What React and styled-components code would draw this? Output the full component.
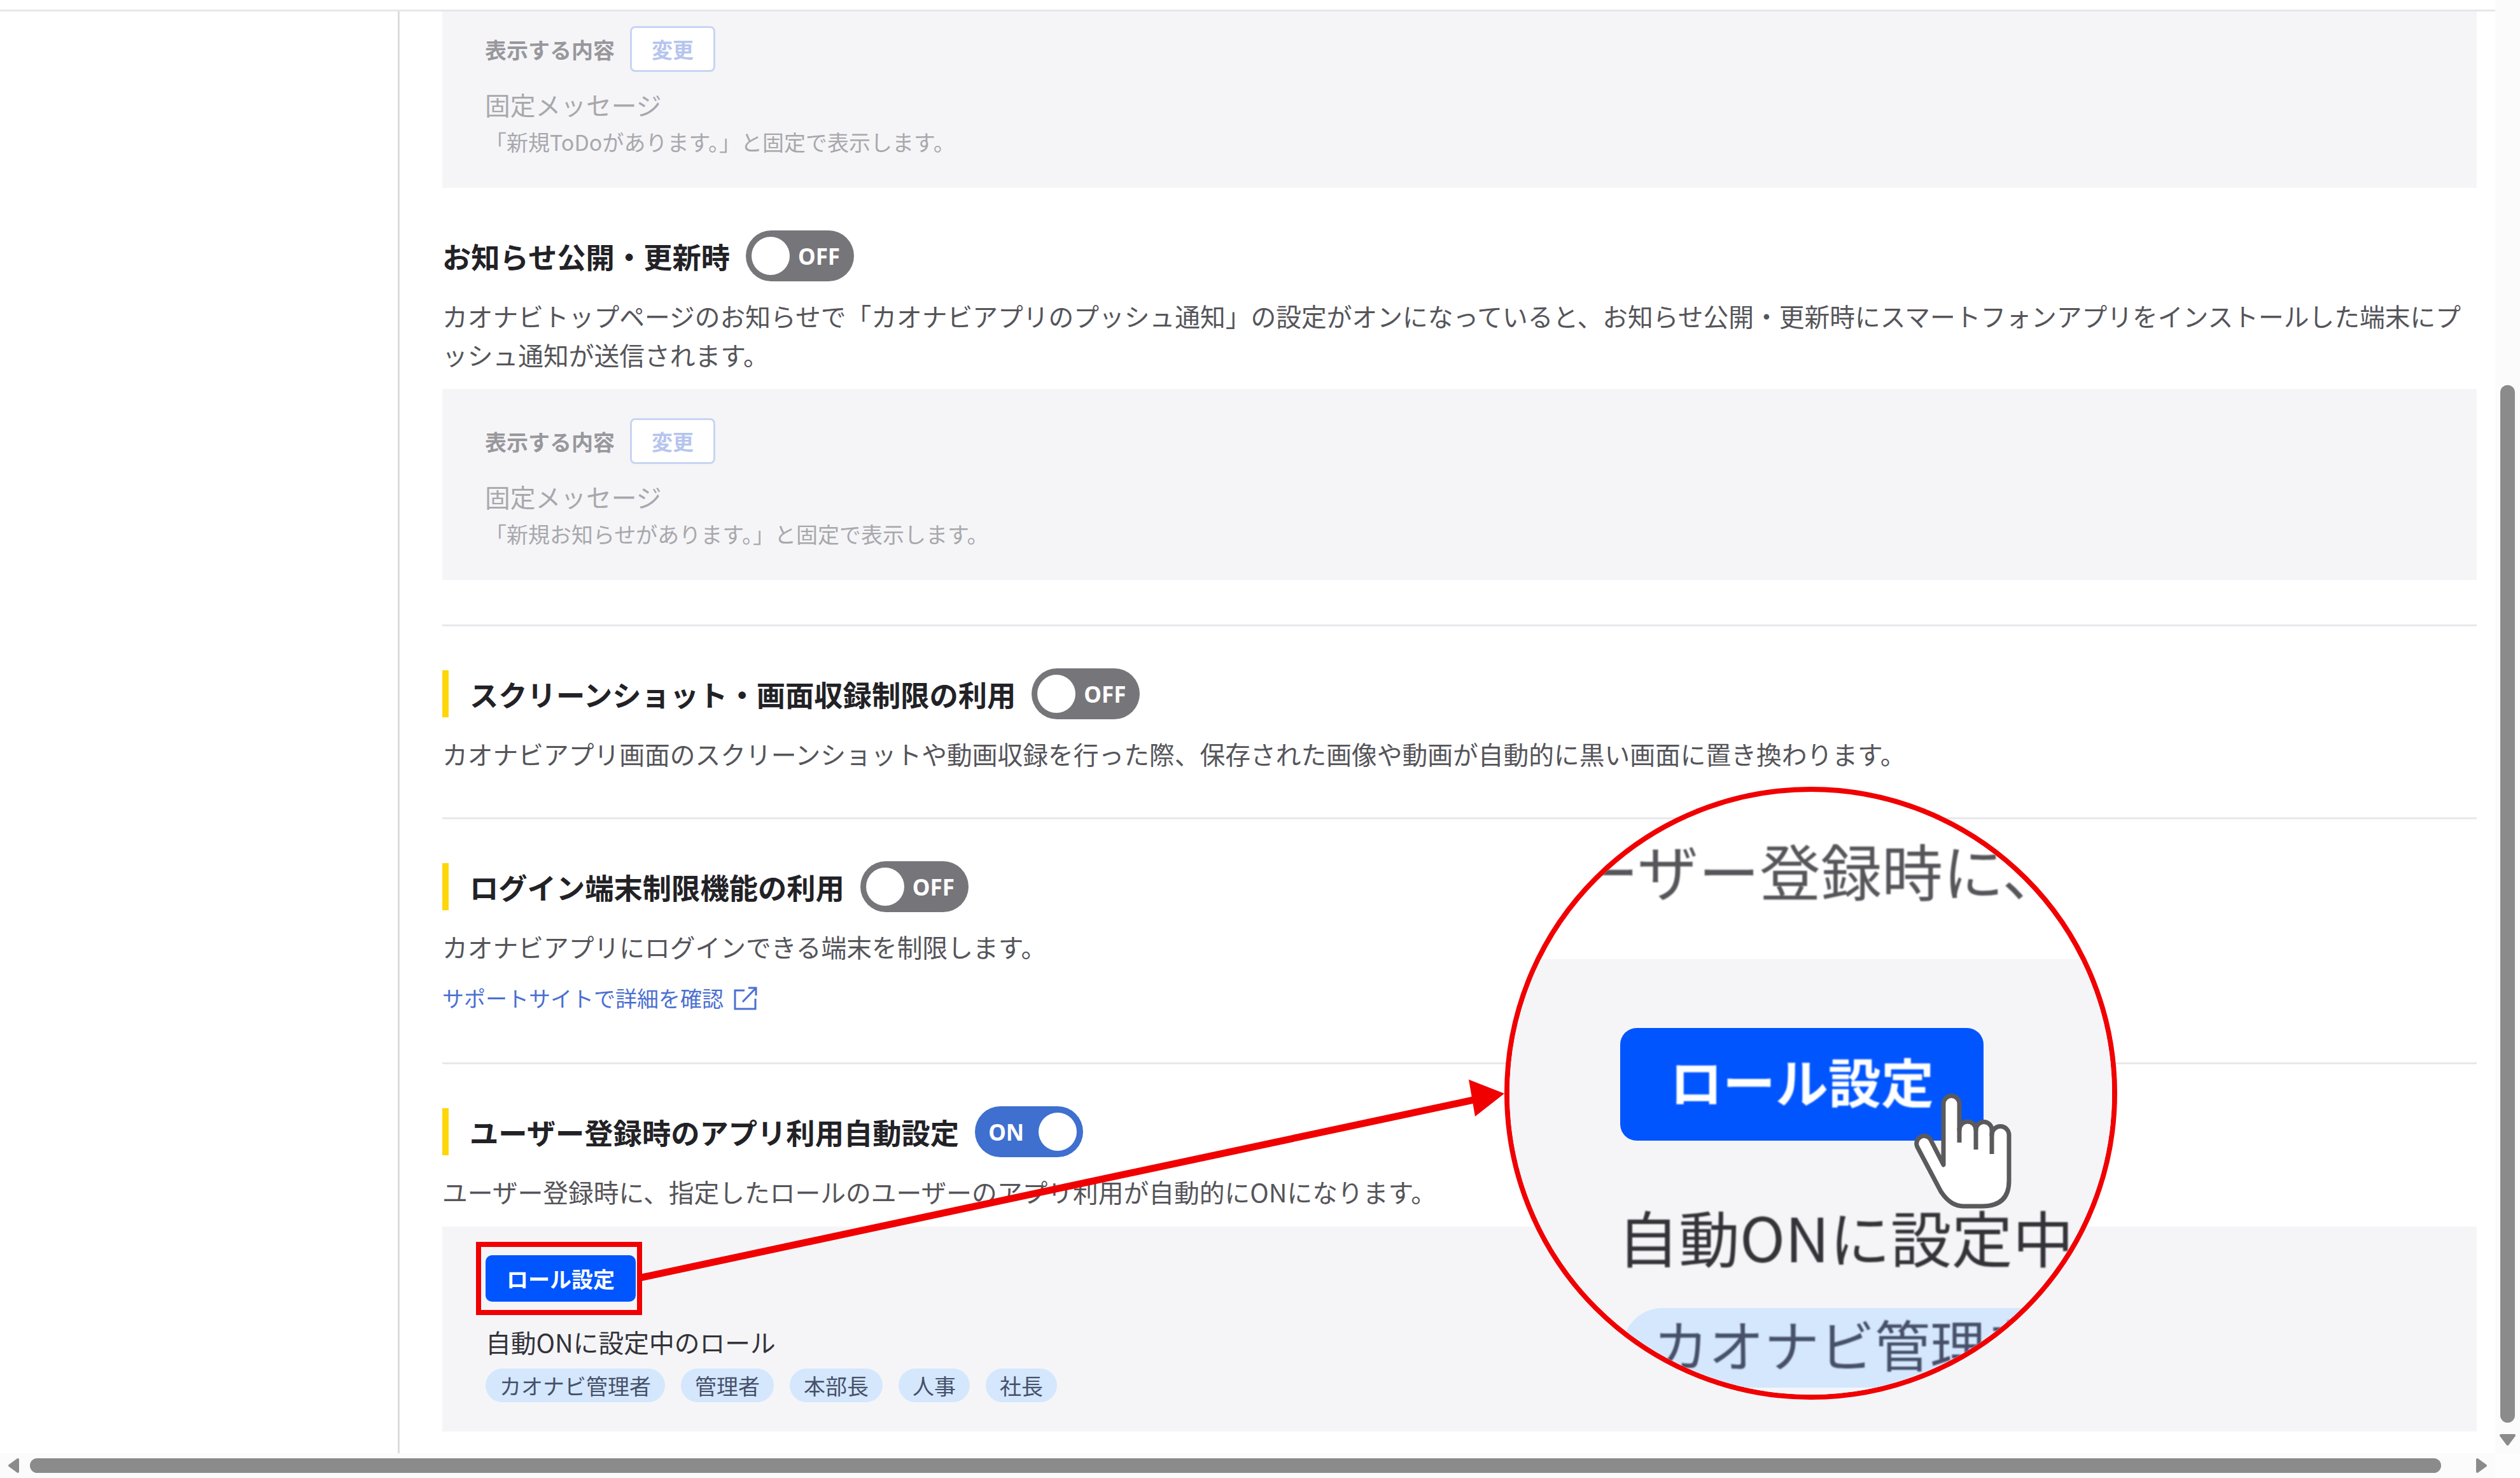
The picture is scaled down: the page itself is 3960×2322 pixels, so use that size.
import React from 'react';
import styled, { createGlobalStyle } from 'styled-components';

const GlobalStyle = createGlobalStyle`
    html, body {
        margin: 0;
        padding: 0;
        background: #fff;
    }

    * {
        box-sizing: border-box;
    }
`

const Page = styled.div`
    position: relative;
    width: 3960px;
    height: 2322px;
    overflow: hidden;
    display: grid;
    grid-template-columns: 3921px 39px;
    grid-template-rows: 2283px 39px;
    font-family: "Noto Sans CJK JP", "Noto Sans", sans-serif;
    background: #fff;
`

const Main = styled.div`
    display: flex;
    flex-direction: column;
    overflow: hidden;
`

const TopBar = styled.div`
    height: 18px;
    flex: none;
    border-bottom: 3px solid #e6e6eb;
`

const Body = styled.div`
    flex: 1;
    display: flex;
    min-height: 0;
`

const Sidebar = styled.div`
    width: 628px;
    flex: none;
    border-right: 3px solid #dcdcdf;
`

const Content = styled.div`
    flex: 1;
    overflow: hidden;
    padding: 0 29px 0 67px;
`

const Scrolled = styled.div`
    margin-top: -23px;
`

const Section = styled.section`
    padding: ${p => p.$top || 66}px 0 ${p => p.$bottom || 70}px;
    border-bottom: ${p => p.$line ? '3px solid #e8e8ec' : 'none'};
`

const TitleRow = styled.div`
    display: flex;
    align-items: center;
    gap: 25px;
    height: 80px;
`

const Title = styled.h3`
    margin: 0;
    font-size: 45.3px;
    line-height: 74px;
    font-weight: 700;
    color: #222226;
    white-space: nowrap;
    ${p => p.$marked && `
        border-left: 10px solid #ffd60a;
        padding-left: 33px;
    `}
`

const Toggle = styled.div`
    width: 170px;
    height: 80px;
    flex: none;
    border-radius: 40px;
    display: flex;
    align-items: center;
    justify-content: space-between;
    padding: ${p => p.$on ? '0 10px 0 21px' : '0 22px 0 9px'};
    background: ${p => p.$on ? '#3f6fcf' : '#76757a'};
`

const ToggleLabel = styled.span`
    font-family: "Noto Sans", "Noto Sans CJK JP", sans-serif;
    font-size: 35px;
    font-weight: 700;
    color: #fff;
`

const Knob = styled.span`
    width: 60px;
    height: 60px;
    border-radius: 50%;
    background: #fff;
`

const Desc = styled.p`
    margin: 23px 0 0;
    font-size: 39.75px;
    line-height: 61px;
    color: #55555a;
`

const Panel = styled.div`
    margin-top: ${p => p.$top || 0}px;
    padding: 46px 67px;
    background: #f5f5f8;
`

const LabelRow = styled.div`
    display: flex;
    align-items: center;
    gap: 24px;
    height: 72px;
`

const Label = styled.span`
    font-size: 34px;
    font-weight: 700;
    color: #98989c;
`

const ChangeButton = styled.div`
    width: 134px;
    height: 72px;
    display: flex;
    align-items: center;
    justify-content: center;
    border: 3px solid #c8d5f2;
    border-radius: 8px;
    background: #fff;
    font-size: 33px;
    font-weight: 700;
    color: #b6c5ee;
`

const Message = styled.div`
    margin-top: 21px;
    font-size: 39.75px;
    line-height: 60px;
    color: #a8a8ac;
`

const Note = styled.div`
    margin-top: 3px;
    font-size: 34px;
    line-height: 52px;
    color: #a8a8ac;
`

const SupportLink = styled.a`
    display: flex;
    align-items: center;
    gap: 16px;
    margin-top: 25px;
    font-size: 34px;
    line-height: 52px;
    color: #4a6fd0;
`

const RolePanel = styled.div`
    margin-top: 25px;
    padding: 45px 68px 46px;
    background: #f5f5f8;
`

const RoleButton = styled.div`
    width: 236px;
    height: 73px;
    display: flex;
    align-items: center;
    justify-content: center;
    border-radius: 10px;
    background: #0055ff;
    font-size: 34px;
    font-weight: 700;
    color: #fff;
`

const RoleHeading = styled.div`
    margin-top: 33px;
    font-size: 39.75px;
    line-height: 60px;
    color: #333338;
`

const Chips = styled.div`
    display: flex;
    gap: 25px;
    margin-top: 12px;
`

const Chip = styled.span`
    height: 53px;
    padding: 0 22px;
    display: flex;
    align-items: center;
    border-radius: 27px;
    background: #d4e7fd;
    font-size: 34px;
    color: #47506a;
`

const VScroll = styled.div`
    display: flex;
    flex-direction: column;
    align-items: center;
    background: #fbfbfb;
`

const VThumb = styled.div`
    width: 23px;
    height: 1630px;
    margin-top: 605px;
    border-radius: 12px;
    background: #8b8b8b;
`

const HScroll = styled.div`
    display: flex;
    align-items: center;
    padding-left: 12px;
    background: #fbfbfb;
`

const HThumb = styled.div`
    width: 3789px;
    height: 23px;
    margin: 0 54px 0 16px;
    border-radius: 12px;
    background: #8b8b8b;
`

const Corner = styled.div`
    background: #fdfdfd;
`

const ScrollArrow = styled.svg`
    display: block;
    flex: none;
    margin-top: ${p => p.$top || 0}px;
    fill: #8b8b8b;
    stroke: #8b8b8b;
    stroke-width: 4;
    stroke-linejoin: round;
`

/* annotations pasted over the screenshot */
const RedFrame = styled.div`
    position: absolute;
    left: 748px;
    top: 1951px;
    width: 261px;
    height: 115px;
    border: 8px solid #f00000;
`

const ArrowLine = styled.svg`
    position: absolute;
    left: 1000px;
    top: 1690px;
`

const Lens = styled.div`
    position: absolute;
    left: 2364px;
    top: 1236px;
    width: 963px;
    height: 963px;
    border: 8px solid #f00000;
    border-radius: 50%;
    overflow: hidden;
    background: #fff;
`

const LensTop = styled.div`
    height: 263px;
    padding: 62px 0 0 107px;
    font-size: 96px;
    line-height: 120px;
    white-space: nowrap;
    color: #55555a;
    filter: blur(1.2px);
`

const LensPanel = styled.div`
    height: 700px;
    padding: 108px 0 0 174px;
    background: #f5f5f8;
`

const LensButton = styled.div`
    width: 571px;
    height: 177px;
    padding-bottom: 14px;
    display: flex;
    align-items: center;
    justify-content: center;
    border-radius: 26px;
    background: #0055ff;
    font-size: 83px;
    font-weight: 700;
    color: #fff;
    span {
        filter: blur(1px);
    }
`

const LensHeading = styled.div`
    margin: 90px 0 0 -4px;
    font-size: 96px;
    line-height: 120px;
    white-space: nowrap;
    color: #333338;
    filter: blur(1.2px);
`

const LensChip = styled.div`
    width: 800px;
    height: 125px;
    margin: 53px 0 0 4px;
    padding: 0 0 16px 48px;
    display: flex;
    align-items: center;
    border-radius: 62px;
    background: #d4e7fd;
    font-size: 87px;
    white-space: nowrap;
    color: #47506a;
    span {
        filter: blur(1.2px);
    }
`

const Hand = styled.svg`
    position: absolute;
    left: 2880px;
    top: 1650px;
`

const ExternalIcon = () => (
    <svg width="37" height="38" viewBox="0 0 37 38" fill="none" stroke="#4a6fd0" strokeWidth="3">
        <path d="M17 7H2V36H34V20" />
        <path d="M14 25L34 4" />
        <path d="M23 3H35V15" />
    </svg>
)

const Setting = ({ title, note }) => (
    <Panel $top={24}>
        <LabelRow>
            <Label>表示する内容</Label>
            <ChangeButton>変更</ChangeButton>
        </LabelRow>
        <Message>{title}</Message>
        <Note>{note}</Note>
    </Panel>
)

const roles = ['カオナビ管理者', '管理者', '本部長', '人事', '社長']

export default function App() {
    return (
        <Page>
            <GlobalStyle />
            <Main>
                <TopBar />
                <Body>
                    <Sidebar />
                    <Content>
                        <Scrolled>
                            <Panel>
                                <LabelRow>
                                    <Label>表示する内容</Label>
                                    <ChangeButton>変更</ChangeButton>
                                </LabelRow>
                                <Message>固定メッセージ</Message>
                                <Note>「新規ToDoがあります。」と固定で表示します。</Note>
                            </Panel>

                            <Section $line $top={67}>
                                <TitleRow>
                                    <Title>お知らせ公開・更新時</Title>
                                    <Toggle><Knob /><ToggleLabel>OFF</ToggleLabel></Toggle>
                                </TitleRow>
                                <Desc>カオナビトップページのお知らせで「カオナビアプリのプッシュ通知」の設定がオンになっていると、お知らせ公開・更新時にスマートフォンアプリをインストールした端末にプッシュ通知が送信されます。</Desc>
                                <Setting title="固定メッセージ" note="「新規お知らせがあります。」と固定で表示します。" />
                            </Section>

                            <Section $line $bottom={70}>
                                <TitleRow>
                                    <Title $marked>スクリーンショット・画面収録制限の利用</Title>
                                    <Toggle><Knob /><ToggleLabel>OFF</ToggleLabel></Toggle>
                                </TitleRow>
                                <Desc>カオナビアプリ画面のスクリーンショットや動画収録を行った際、保存された画像や動画が自動的に黒い画面に置き換わります。</Desc>
                            </Section>

                            <Section $line $bottom={75}>
                                <TitleRow>
                                    <Title $marked>ログイン端末制限機能の利用</Title>
                                    <Toggle><Knob /><ToggleLabel>OFF</ToggleLabel></Toggle>
                                </TitleRow>
                                <Desc>カオナビアプリにログインできる端末を制限します。</Desc>
                                <SupportLink>サポートサイトで詳細を確認<ExternalIcon /></SupportLink>
                            </Section>

                            <Section>
                                <TitleRow>
                                    <Title $marked>ユーザー登録時のアプリ利用自動設定</Title>
                                    <Toggle $on><ToggleLabel>ON</ToggleLabel><Knob /></Toggle>
                                </TitleRow>
                                <Desc>ユーザー登録時に、指定したロールのユーザーのアプリ利用が自動的にONになります。</Desc>
                                <RolePanel>
                                    <RoleButton>ロール設定</RoleButton>
                                    <RoleHeading>自動ONに設定中のロール</RoleHeading>
                                    <Chips>
                                        {roles.map(role => <Chip key={role}>{role}</Chip>)}
                                    </Chips>
                                </RolePanel>
                            </Section>
                        </Scrolled>
                    </Content>
                </Body>
            </Main>

            <VScroll>
                <VThumb />
                <ScrollArrow $top={17} width="27" height="20" viewBox="0 0 27 20">
                    <polygon points="3,3 24,3 13.5,17" />
                </ScrollArrow>
            </VScroll>

            <HScroll>
                <ScrollArrow width="19" height="25" viewBox="0 0 19 25">
                    <polygon points="16,3 16,22 3,12.5" />
                </ScrollArrow>
                <HThumb />
                <ScrollArrow width="19" height="25" viewBox="0 0 19 25">
                    <polygon points="3,3 3,22 16,12.5" />
                </ScrollArrow>
            </HScroll>
            <Corner />

            <RedFrame />
            <ArrowLine width="1380" height="330" viewBox="0 0 1380 330">
                <line x1="8" y1="317" x2="1320" y2="37" stroke="#f00000" strokeWidth="11" />
                <polygon points="1364,28 1308,6 1318,64" fill="#f00000" />
            </ArrowLine>

            <Lens>
                <LensTop>ーザー登録時に、</LensTop>
                <LensPanel>
                    <LensButton><span>ロール設定</span></LensButton>
                    <LensHeading>自動ONに設定中のロール</LensHeading>
                    <LensChip><span>カオナビ管理者</span></LensChip>
                </LensPanel>
            </Lens>

            <Hand width="300" height="280" viewBox="0 0 300 280" fill="none" stroke="#5a5a5c" strokeWidth="7">
                <path
                    fill="#fff"
                    strokeLinejoin="round"
                    d="M174 180V84a12.5 12.5 0 0 1 25 0V125a13 13 0 0 1 26 0a12.5 12.5 0 0 1 25 0V133a13.5 13.5 0 0 1 27 0V205Q277 245 235 245H205Q185 245 170 222L133 152a12 12 0 0 1 20 -13Z"
                />
                <path d="M199 122V145M225 122V156M250 130V163" />
            </Hand>
        </Page>
    )
}
